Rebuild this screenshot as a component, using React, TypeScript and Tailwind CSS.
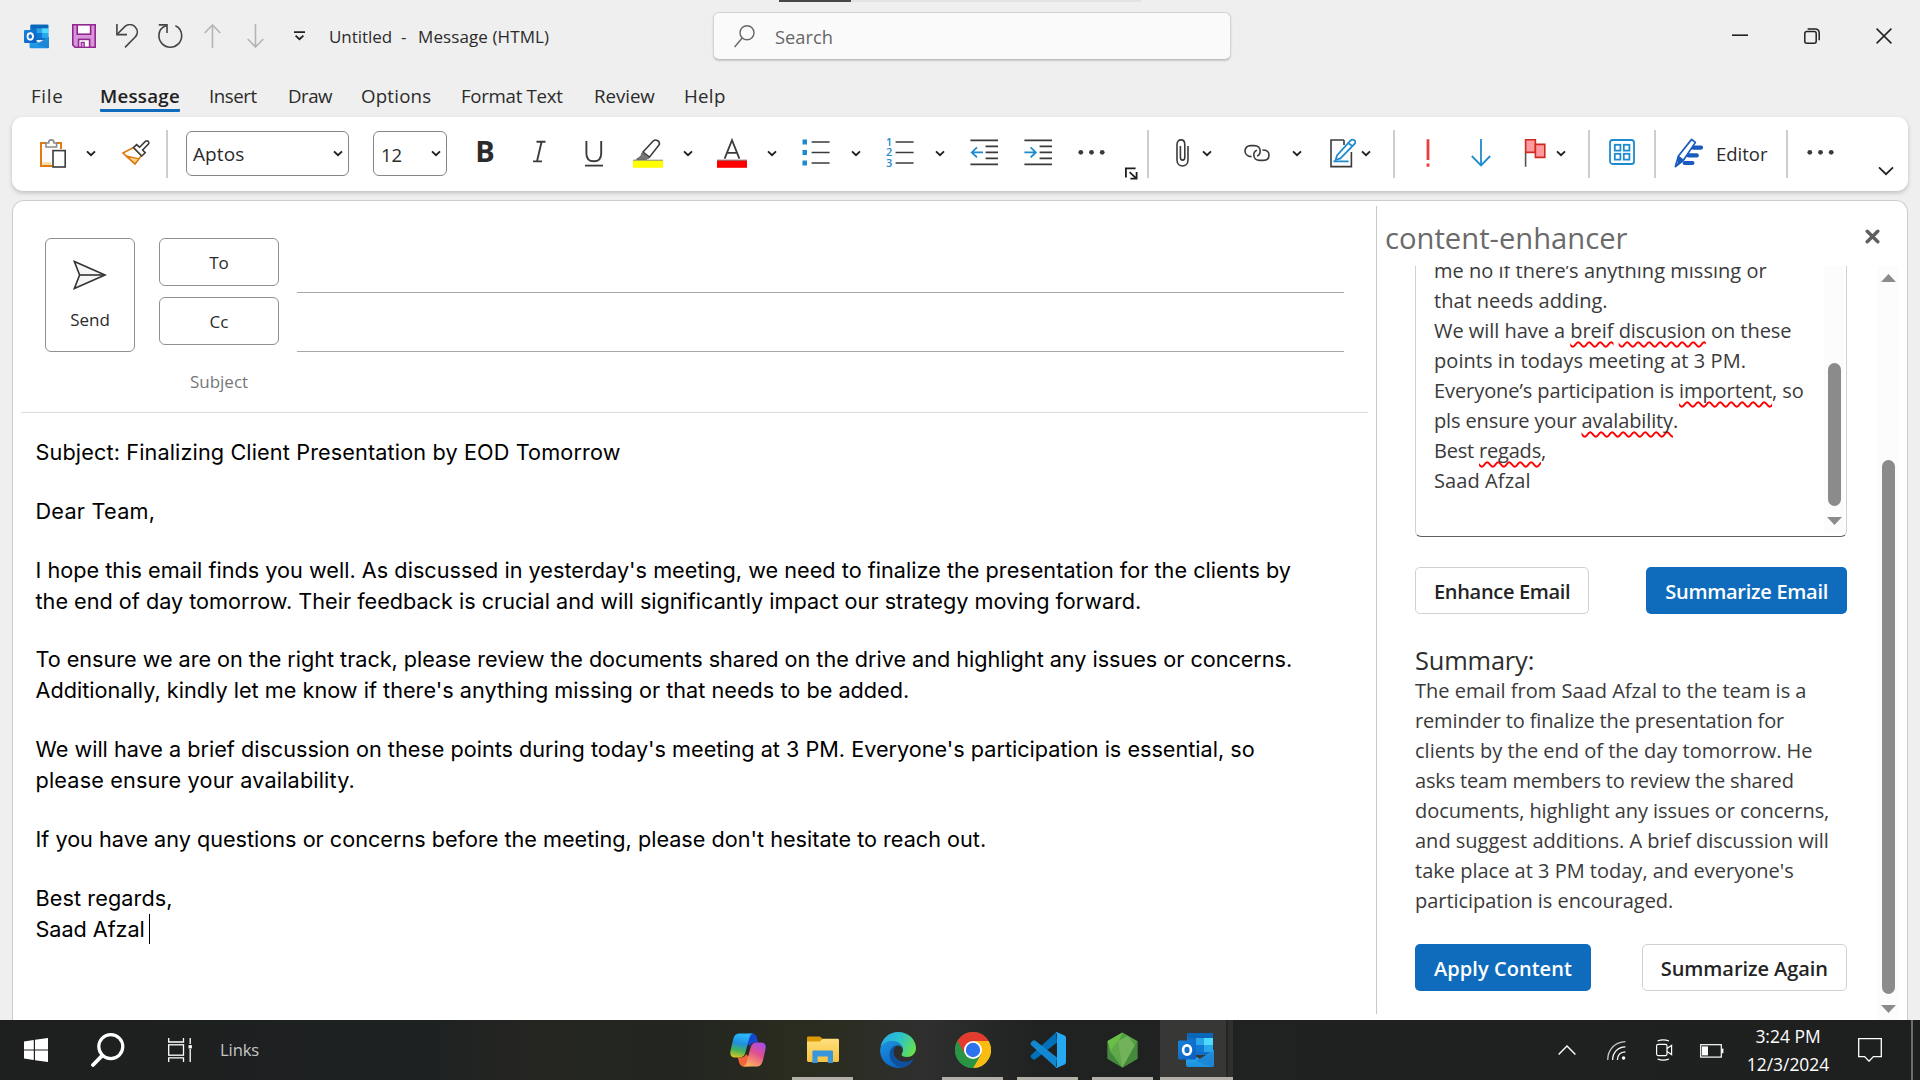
import React from "react";
import type { ReactNode } from "react";

/* ---------- shared glyphs ---------- */

function Caret({ className = "" }: { className?: string }) {
  return (
    <svg className={`h-8 w-[10px] shrink-0 ${className}`} viewBox="0 0 10 32" fill="none" stroke="#1f1f1f" strokeWidth="1.9">
      <path d="M1 13.4 L5 17.2 L9 13.4" />
    </svg>
  );
}

function Icon({ w, className = "", children }: { w: number; className?: string; children: ReactNode }) {
  return (
    <svg className={`h-8 shrink-0 ${className}`} width={w} viewBox={`0 0 ${w} 32`} fill="none" stroke="#3b3b3b" strokeWidth="1.6">
      {children}
    </svg>
  );
}

function Separator({ className = "" }: { className?: string }) {
  return <div className={`h-12 w-0.5 shrink-0 bg-[#cdcdcd] ${className}`} />;
}

function Dots({ className = "" }: { className?: string }) {
  return (
    <Icon w={28} className={className}>
      <g fill="#3b3b3b" stroke="none">
        <circle cx="2.8" cy="14.3" r="2.4" />
        <circle cx="13.5" cy="14.3" r="2.4" />
        <circle cx="24.2" cy="14.3" r="2.4" />
      </g>
    </Icon>
  );
}

function OutlookLogo({ size, id }: { size: number; id: string }) {
  return (
    <svg width={size} height={size} viewBox="0 0 36 36" className="shrink-0">
      <defs>
        <linearGradient id={`${id}-env`} x1="0" y1="0" x2="0" y2="1">
          <stop offset="0" stopColor="#35b8f1" />
          <stop offset="1" stopColor="#1a8fe0" />
        </linearGradient>
        <linearGradient id={`${id}-sq`} x1="0" y1="0" x2="1" y2="1">
          <stop offset="0" stopColor="#1784d9" />
          <stop offset="1" stopColor="#0a5cc0" />
        </linearGradient>
      </defs>
      <rect x="9" y="1" width="26" height="22" rx="1.5" fill="#0f6fc6" />
      <rect x="18" y="6" width="8" height="7" fill="#2aa5ea" />
      <rect x="26" y="6" width="9" height="7" fill="#50d9ff" />
      <rect x="18" y="13" width="8" height="7" fill="#0f78d4" />
      <rect x="26" y="13" width="9" height="7" fill="#28a8ea" />
      <rect x="10" y="1" width="25" height="5" fill="#0a66b8" />
      <path d="M36 18 V33 Q36 35 34 35 H10 Q8 35 8 33 V19 L22 27 Z" fill={`url(#${id}-env)`} />
      <path d="M36 18.5 L18 29 L34.5 35 Q36 35 36 33 Z" fill="#1b7fd0" opacity="0.75" />
      <rect x="0" y="8.5" width="18" height="19" rx="1.6" fill={`url(#${id}-sq)`} />
      <ellipse cx="9" cy="18" rx="3.9" ry="4.6" fill="none" stroke="#fff" strokeWidth="2.7" />
    </svg>
  );
}

/* ---------- title bar ---------- */

function TitleBar() {
  return (
    <header className="relative flex h-[72px] shrink-0 items-center pl-6 text-[#2b2b2b]">
      <div className="absolute top-0 left-[779px] flex h-0.5">
        <div className="w-[72px] bg-[#474747]" />
        <div className="w-[290px] bg-[#e3e3e3]" />
      </div>
      <OutlookLogo size={25} id="tb" />
      <svg className="ml-[23px] shrink-0" width="24" height="24" viewBox="0 0 24 24" fill="none">
        <path d="M0.8 0.8 H23.2 V23.2 H3 L0.8 21 Z" fill="#d795dc" stroke="#92278f" strokeWidth="1.6" />
        <rect x="5.2" y="0.8" width="13.4" height="9.4" fill="#fff" stroke="#92278f" strokeWidth="1.6" />
        <rect x="6.6" y="15.4" width="11" height="8" fill="#fff" stroke="#92278f" strokeWidth="1.6" />
        <rect x="9.2" y="18.4" width="3" height="5" fill="#d795dc" stroke="#92278f" strokeWidth="1.2" />
      </svg>
      <svg className="ml-5 shrink-0" width="22" height="24" viewBox="0 0 22 24" fill="none" stroke="#444" strokeWidth="1.6">
        <path d="M0.9 0 V10.6 H11" />
        <path d="M1.2 10.2 L9 2.4 C12 -0.2 16.2 0 19 2.8 C22 6 22 10 19.2 13 L9 23.4" />
      </svg>
      <svg className="ml-5 shrink-0" width="25" height="24" viewBox="0 0 25 24" fill="none" stroke="#444" strokeWidth="1.6">
        <path d="M0.8 0.9 H9 V9" />
        <path d="M8.6 1.4 C3.6 3 0.9 7.2 0.9 11.6 C0.9 18.2 6 23.2 12.3 23.2 C18.6 23.2 23.7 18.2 23.7 11.8 C23.7 7.4 21.2 3.6 17.4 1.8" />
      </svg>
      <svg className="ml-[21px] shrink-0" width="17" height="24" viewBox="0 0 17 24" fill="none" stroke="#b4b4b4" strokeWidth="1.6">
        <path d="M8.5 24 V1 M0.7 9 L8.5 1 L16.3 9" />
      </svg>
      <svg className="ml-[26px] shrink-0" width="17" height="24" viewBox="0 0 17 24" fill="none" stroke="#b4b4b4" strokeWidth="1.6">
        <path d="M8.5 0 V23 M0.7 15 L8.5 23 L16.3 15" />
      </svg>
      <svg className="ml-[29px] shrink-0" width="13" height="10" viewBox="0 0 13 10" fill="none" stroke="#222" strokeWidth="1.8">
        <path d="M1 1.2 H12 M2.6 4.6 L6.5 8.2 L10.4 4.6" />
      </svg>
      <div className="ml-[23px] flex w-[384px] shrink-0 pt-0.5 text-[17px] leading-6 whitespace-pre">
        <span className="w-[72px] tracking-[-0.06px]">Untitled</span>
        <span className="w-[17px]">-</span>
        <span className="tracking-[0.1px]">Message (HTML)</span>
      </div>
      <div className="flex h-12 w-[518px] shrink-0 items-center rounded-md border border-[#d4d4d4] border-b-[#bdbdbd] bg-[#fafafa] pl-5 shadow-[0_1px_2px_rgba(0,0,0,0.16)]">
        <svg width="21" height="23" viewBox="0 0 21 23" fill="none" stroke="#666" strokeWidth="1.4">
          <circle cx="13" cy="7.8" r="7" />
          <path d="M8.2 13 L0.6 22" />
        </svg>
        <span className="ml-5 pt-0.5 text-[18.3px] leading-6 text-[#666]">Search</span>
      </div>
      <svg className="ml-[501px] shrink-0" width="16" height="16" viewBox="0 0 16 16" stroke="#222" strokeWidth="1.6">
        <path d="M0 7.2 H16" />
      </svg>
      <svg className="ml-14 shrink-0" width="16" height="16" viewBox="0 0 16 16" fill="none" stroke="#222" strokeWidth="1.5">
        <rect x="0.8" y="3.4" width="11.4" height="11.8" rx="2" />
        <path d="M3.6 0.9 H11 Q15.2 0.9 15.2 5 V12.2" />
      </svg>
      <svg className="ml-14 shrink-0" width="16" height="16" viewBox="0 0 16 16" stroke="#222" strokeWidth="1.5">
        <path d="M0.6 0.6 L15.4 15.4 M15.4 0.6 L0.6 15.4" />
      </svg>
    </header>
  );
}

/* ---------- menu tabs ---------- */

function MenuTabs() {
  return (
    <nav className="flex h-[45px] shrink-0 pt-[11px] pl-[31px] text-[18.7px] leading-[26px] text-[#2b2b2b]">
      <span className="w-[69px] tracking-[0.7px]">File</span>
      <span className="mr-[29px] h-[29px] w-[80px] rounded-b-[1px] border-b-[3px] border-[#0f6cbd] font-semibold tracking-[0.25px] whitespace-nowrap text-[#222]">
        Message
      </span>
      <span className="w-[79px] tracking-[-0.45px]">Insert</span>
      <span className="w-[73px] tracking-[-0.5px]">Draw</span>
      <span className="w-[100px] tracking-[0.2px]">Options</span>
      <span className="w-[133px] tracking-[-0.3px]">Format Text</span>
      <span className="w-[90px] tracking-[-0.05px]">Review</span>
      <span className="tracking-[0.3px]">Help</span>
    </nav>
  );
}

/* ---------- ribbon ---------- */

function Ribbon() {
  return (
    <div className="mx-3 flex h-[74px] shrink-0 items-center rounded-[11px] bg-white text-[#2b2b2b] shadow-[0_2px_4px_rgba(0,0,0,0.2)]">
      {/* paste */}
      <Icon w={26} className="ml-7">
        <path d="M7 5 H1 V28 H12" stroke="#e07b10" strokeWidth="2" fill="#fbfbfb" />
        <path d="M2.6 25.6 H11" stroke="#fbd99a" strokeWidth="2.6" />
        <path d="M16 5 H21 V11" stroke="#e07b10" strokeWidth="2" />
        <path d="M6 9 V5 H8.6 C8.6 0.8 14 0.8 14 5 H16.6 V9 Z" fill="#fff" stroke="#8a8a8a" />
        <rect x="13" y="12.6" width="12.2" height="16.4" fill="#fff" />
      </Icon>
      <Caret className="ml-5" />
      {/* format painter */}
      <Icon w={28} className="ml-[26px]">
        <path d="M1 15 L11.5 9.6 L19.4 17.6 L13 26 Z" fill="#fff" stroke="#e07b10" />
        <path d="M4 18 L17 20.8 L13 25.6 Z" fill="#fbd58e" stroke="#e07b10" strokeWidth="1.3" strokeLinejoin="round" />
        <path d="M11.5 9.6 L14.6 6.6 L17.6 9.2 L23.6 3.2 C25.6 2 27.6 4 26.4 6 L20.6 12 L23.2 14.8 L19.8 18 Z" fill="#fff" />
      </Icon>
      <Separator className="ml-4" />
      <div className="mb-px ml-[18px] flex h-[45px] w-[163px] shrink-0 items-center justify-between rounded-md border border-[#868686] pr-[5px] pl-1.5 text-[19px]">
        <span className="pt-[2px] tracking-[0.1px]">Aptos</span>
        <Caret />
      </div>
      <div className="mb-px ml-6 flex h-[45px] w-[74px] shrink-0 items-center justify-between rounded-md border border-[#868686] pr-[5px] pl-[7px] text-[18.5px]">
        <span className="pt-[2px]">12</span>
        <Caret />
      </div>
      <span className="ml-[26px] w-6 shrink-0 pb-[6px] text-center text-[29px] leading-8 font-bold">B</span>
      <Icon w={24} className="ml-[30px]">
        <path d="M9.5 3.8 H18.5 M6 23.4 H15 M14.6 3.8 L10 23.4" strokeWidth="1.9" />
      </Icon>
      <Icon w={24} className="ml-[31px]">
        <path d="M4.4 3 V15.4 C4.4 21 7.4 23.2 11.8 23.2 C16.4 23.2 19.2 20.8 19.2 15.4 V3" strokeWidth="1.9" />
        <path d="M3 27.6 H21" strokeWidth="1.8" />
      </Icon>
      {/* highlighter */}
      <Icon w={32} className="ml-[26px]">
        <rect x="1" y="22.4" width="30" height="7.4" fill="#ffff00" stroke="none" />
        <path d="M1 22.2 H31" stroke="#8a8a6a" strokeWidth="1" />
        <path d="M11 14 L21.4 2.8 C23.4 1 28 2.4 27.4 6.4 L17.4 19.2 Z" fill="#fff" />
        <path d="M10 14.6 L17 20 L14 21.4 H4.4 L9 18 Z" fill="#777" stroke="#666" strokeWidth="1" />
      </Icon>
      <Caret className="ml-[19px]" />
      {/* font colour */}
      <Icon w={32} className="ml-[23px]">
        <rect x="1" y="22.4" width="30" height="7.4" fill="#ff0000" stroke="none" />
        <path d="M1 22.2 H31" stroke="#8a5a5a" strokeWidth="1" />
        <path d="M8.6 20.6 L16 2.2 L23.4 20.6 M11 14.8 H21" strokeWidth="1.8" />
      </Icon>
      <Caret className="ml-[19px]" />
      {/* bullets */}
      <Icon w={28} className="ml-[25px]">
        <path d="M9.6 4 H27.6 M9.6 14.5 H27.6 M9.6 25 H27.6" />
        <path d="M0.5 4 H5 M0.5 14.5 H5 M0.5 25 H5" stroke="#1e8bcd" strokeWidth="4.8" />
      </Icon>
      <Caret className="ml-[21px]" />
      {/* numbering */}
      <Icon w={28} className="ml-[25px] overflow-visible">
        <path d="M9.6 4 H27.6 M9.6 14.5 H27.6 M9.6 25 H27.6" />
        <g fill="#1e8bcd" stroke="none" fontSize="11" fontWeight="600">
          <text x="0" y="8">1</text>
          <text x="0" y="18.4">2</text>
          <text x="0" y="28.8">3</text>
        </g>
      </Icon>
      <Caret className="ml-[21px]" />
      {/* outdent */}
      <Icon w={28} className="ml-[25px]">
        <path d="M0.4 2.4 H28 M15.6 8.4 H28 M15.6 14.4 H28 M15.6 20.4 H28 M0.4 26.4 H28" />
        <path d="M13 14.4 H1.6 M7 9.4 L1.8 14.4 L7 19.4" stroke="#1e8bcd" strokeWidth="1.8" />
      </Icon>
      {/* indent */}
      <Icon w={28} className="ml-[26px]">
        <path d="M0.4 2.4 H28 M15.6 8.4 H28 M15.6 14.4 H28 M15.6 20.4 H28 M0.4 26.4 H28" />
        <path d="M0.4 14.4 H12 M6.6 9.4 L11.8 14.4 L6.6 19.4" stroke="#1e8bcd" strokeWidth="1.8" />
      </Icon>
      <Dots className="ml-[26px]" />
      <svg className="mt-[38px] ml-[19px] shrink-0" width="13" height="13" viewBox="0 0 13 13" fill="none" stroke="#1f1f1f" strokeWidth="1.8">
        <path d="M0.9 10.6 V1.4 H10.6 M4.6 5.2 L11 11.2 M5.4 11.6 H11.6 V5" />
      </svg>
      <Separator className="ml-[9px]" />
      {/* attach */}
      <Icon w={13} className="ml-[27px]">
        <path d="M12 8 V22 C12 30 1 30 1 22 V6.4 C1 0.4 8.8 0.4 8.8 6.4 V19.6 C8.8 23 4.4 23 4.4 19.6 V8" />
      </Icon>
      <Caret className="ml-[13px]" />
      {/* link */}
      <Icon w={26} className="ml-8">
        <path d="M7.6 18.6 C3.4 18.6 1 16 1 13 C1 10 3.2 7.6 6.6 7.6 H10.2 C14 7.6 16.2 10 16.2 13 C16.2 15.4 15 17.4 13 18" />
        <path d="M18.4 12 C22.6 12 25 14 25 17 C25 20.2 22.8 22.4 19.4 22.4 H15.8 C12 22.4 9.8 20 9.8 17 C9.8 14.6 11 12.8 13 12.2" />
      </Icon>
      <Caret className="ml-[22px]" />
      {/* signature */}
      <Icon w={26} className="ml-7">
        <path d="M14 2 H1 V28.6 H21.4 V14" fill="#fbfbfb" />
        <path d="M14 2 V7" />
        <path d="M20.4 2.6 C22.4 0.4 26.4 2.4 25 5.4 L10.4 20.4 L5.6 22 L7 17.4 Z" fill="#fff" stroke="#1e8bcd" strokeWidth="1.7" />
        <path d="M3.4 23.4 H18.6 M18 5 L22.4 8" stroke="#1e8bcd" strokeWidth="1.6" />
      </Icon>
      <Caret className="ml-[5px]" />
      <Separator className="ml-[22px]" />
      <Icon w={6} className="ml-[30px]">
        <path d="M3 1.2 V22 M3 25.4 V28.8" stroke="#ef3b3b" strokeWidth="2.8" />
      </Icon>
      <Icon w={20} className="ml-10">
        <path d="M10 1 V27 M0.8 18 L10 27.4 L19.2 18" stroke="#1e8bcd" strokeWidth="1.8" />
      </Icon>
      {/* flag */}
      <Icon w={22} className="ml-[33px]">
        <path d="M1.6 15 V28.8" stroke="#555" />
        <path d="M1.6 1.8 H11.4 V14.4 H1.6 Z" fill="#ff9a9e" stroke="#cf2a20" strokeWidth="1.6" />
        <path d="M11.4 6.4 H20.8 V19.4 H11.4 Z" fill="#ff9a9e" stroke="#cf2a20" strokeWidth="1.6" />
      </Icon>
      <Caret className="ml-[10px]" />
      <Separator className="ml-[22px]" />
      {/* apps */}
      <Icon w={26} className="ml-[19px]">
        <g stroke="#1e8bcd" strokeWidth="1.8">
          <rect x="1" y="2" width="24" height="24" rx="2.6" />
          <rect x="5.8" y="6.8" width="5.6" height="5.8" />
          <rect x="14.8" y="6.8" width="5.6" height="5.8" />
          <rect x="5.8" y="15.8" width="5.6" height="5.8" />
          <rect x="14.8" y="15.8" width="5.6" height="5.8" />
        </g>
      </Icon>
      <Separator className="ml-[19px]" />
      {/* editor */}
      <Icon w={30} className="ml-[18px]">
        <path d="M19 9.6 H27 M14.6 17.4 H22.8 M10.6 25 H18.4" stroke="#185abd" strokeWidth="4.2" strokeLinecap="round" />
        <path d="M1.4 28.6 L4.4 18 L17.6 1.4 L21.4 4.4 L9.6 22 Z" fill="#fff" stroke="#185abd" strokeWidth="1.7" strokeLinejoin="round" />
        <path d="M4.4 18 L9.6 22 L3 28" fill="#185abd" stroke="#185abd" strokeWidth="1" />
      </Icon>
      <span className="ml-[12px] w-[70px] shrink-0 pb-px text-[18.5px]">Editor</span>
      <Separator />
      <Dots className="ml-[19px]" />
      <svg className="mt-[33px] ml-[43px] shrink-0" width="16" height="10" viewBox="0 0 16 10" fill="none" stroke="#222" strokeWidth="1.8">
        <path d="M1 1.4 L8 8.2 L15 1.4" />
      </svg>
    </div>
  );
}

/* ---------- compose area ---------- */

function Recipients() {
  return (
    <div className="flex h-[212px] shrink-0 border-b border-[#dcdcdc] pt-[37px] pl-6 text-[17px] text-[#2b2b2b]">
      <div className="flex h-[114px] w-[90px] flex-col items-center rounded-md border border-[#909090] pt-[21px]">
        <svg width="34" height="30" viewBox="0 0 34 30" fill="none" stroke="#333" strokeWidth="1.6">
          <path d="M1.4 1.6 L32 15 L1.4 28.4 L6.6 15 Z" fill="#f6f6f6" />
          <path d="M6.6 15 H32" />
        </svg>
        <span className="mt-[18px] leading-6 tracking-[-0.02px]">Send</span>
      </div>
      <div className="ml-6 flex w-[120px] flex-col">
        <div className="flex h-[48px] items-center justify-center rounded-md border border-[#909090] pt-px">To</div>
        <div className="mt-[11px] flex h-[48px] items-center justify-center rounded-md border border-[#909090] pt-px">Cc</div>
        <span className="mt-[25px] text-center leading-6 text-[#777]">Subject</span>
      </div>
      <div className="ml-[18px] w-[1047px]">
        <div className="h-[55px] border-b border-[#a8a8a8]" />
        <div className="h-[59px] border-b border-[#a8a8a8]" />
      </div>
    </div>
  );
}

function MessageBody() {
  return (
    <div className="flex flex-col gap-[27.8px] pt-[24px] pl-[14.5px] font-['Inter',sans-serif] text-[21.65px] leading-[31px] whitespace-nowrap text-black">
      <p className="tracking-[0.13px]">Subject: Finalizing Client Presentation by EOD Tomorrow</p>
      <p className="tracking-[0.25px]">Dear Team,</p>
      <p>
        <span className="tracking-[0.02px]">
          I hope this email finds you well. As discussed in yesterday's meeting, we need to finalize the presentation for the clients by
        </span>
        <br />
        the end of day tomorrow. Their feedback is crucial and will significantly impact our strategy moving forward.
      </p>
      <p>
        <span className="tracking-[-0.03px]">
          To ensure we are on the right track, please review the documents shared on the drive and highlight any issues or concerns.
        </span>
        <br />
        <span className="tracking-[0.02px]">Additionally, kindly let me know if there's anything missing or that needs to be added.</span>
      </p>
      <p>
        We will have a brief discussion on these points during today's meeting at 3 PM. Everyone's participation is essential, so
        <br />
        <span className="tracking-[0.17px]">please ensure your availability.</span>
      </p>
      <p>If you have any questions or concerns before the meeting, please don't hesitate to reach out.</p>
      <p>
        <span className="tracking-[0.09px]">Best regards,</span>
        <br />
        <span className="flex tracking-[-0.05px]">
          Saad Afzal
          <span className="ml-[4px] h-[30px] w-px bg-black" />
        </span>
      </p>
    </div>
  );
}

/* ---------- add-in pane ---------- */

function Misspelt({ children }: { children: ReactNode }) {
  return (
    <span className="underline decoration-[#f00] decoration-wavy decoration-[1.6px] underline-offset-[3px] [text-decoration-skip-ink:none]">
      {children}
    </span>
  );
}

function Arrow({ up = false, className = "" }: { up?: boolean; className?: string }) {
  return (
    <svg width="15" height="8" viewBox="0 0 15 8" fill="#8b8b8b" className={`shrink-0 ${className}`}>
      <path d={up ? "M0 8 L7.5 0 L15 8 Z" : "M0 0 L7.5 8 L15 0 Z"} />
    </svg>
  );
}

const plainButton = "flex h-[47px] items-center rounded-[5px] border border-[#d1d1d1] bg-white px-[18px] pt-[3px] text-[#242424]";
const primaryButton = "flex h-[47px] items-center rounded-[5px] bg-[#0f6cbd] px-[19px] pt-[3px] text-white";

function AddInPane() {
  return (
    <aside className="flex min-h-0 flex-1 flex-col">
      <div className="flex h-[65px] shrink-0 justify-between pr-[27px] pl-[8px] text-[#6a6a6a]">
        <h1 className="pt-[17px] text-[29.2px] leading-10">content-enhancer</h1>
        <svg className="mt-[28px]" width="15" height="15" viewBox="0 0 15 15" stroke="#5f5f5f" strokeWidth="3.4" strokeLinecap="round">
          <path d="M2.2 2.2 L12.8 12.8 M12.8 2.2 L2.2 12.8" />
        </svg>
      </div>
      <div className="flex min-h-0 flex-1 overflow-hidden">
        <div className="ml-[38px] w-[432px] text-[20px] leading-[30px] whitespace-nowrap text-[#3a3a3a]">
          <div className="flex h-[271px] justify-between overflow-hidden rounded-b-md border border-t-0 border-[#d1d1d1] border-b-[#616161] pr-0.5 pl-[18px]">
            <div className="-mt-[10px]">
              <div className="tracking-[0.02px]">me no if there’s anything missing or</div>
              <div>that needs adding.</div>
              <div className="tracking-[-0.04px]">
                We will have a <Misspelt>breif</Misspelt> <Misspelt>discusion</Misspelt> on these
              </div>
              <div className="tracking-[0.06px]">points in todays meeting at 3 PM.</div>
              <div className="tracking-[-0.08px]">
                Everyone’s participation is <Misspelt>importent</Misspelt>, so
              </div>
              <div className="tracking-[-0.13px]">
                pls ensure your <Misspelt>avalability</Misspelt>.
              </div>
              <div className="tracking-[-0.2px]">
                Best <Misspelt>regads</Misspelt>,
              </div>
              <div className="tracking-[0.1px]">Saad Afzal</div>
            </div>
            <div className="flex h-[267px] w-5 flex-col items-center bg-[#fcfcfc]">
              <div className="mt-[97px] h-[143px] w-[13px] shrink-0 rounded-full bg-[#8b8b8b]" />
              <Arrow className="mt-[11px]" />
            </div>
          </div>
          <div className="mt-[30px] flex justify-between font-semibold">
            <div className={plainButton}>
              <span className="tracking-[-0.32px]">Enhance Email</span>
            </div>
            <div className={primaryButton}>
              <span className="tracking-[-0.28px]">Summarize Email</span>
            </div>
          </div>
          <h2 className="mt-[30px] text-[25.4px] leading-[32px] tracking-[-0.15px] text-[#2e2e2e]">Summary:</h2>
          <div>
            <div>The email from Saad Afzal to the team is a</div>
            <div className="tracking-[-0.14px]">reminder to finalize the presentation for</div>
            <div>clients by the end of the day tomorrow. He</div>
            <div className="tracking-[-0.16px]">asks team members to review the shared</div>
            <div className="tracking-[-0.07px]">documents, highlight any issues or concerns,</div>
            <div>and suggest additions. A brief discussion will</div>
            <div>take place at 3 PM today, and everyone's</div>
            <div className="tracking-[-0.04px]">participation is encouraged.</div>
          </div>
          <div className="mt-[28px] flex justify-between font-semibold">
            <div className={primaryButton}>
              <span className="tracking-[0.05px]">Apply Content</span>
            </div>
            <div className={plainButton}>
              <span className="tracking-[-0.06px]">Summarize Again</span>
            </div>
          </div>
        </div>
        <div className="ml-[30px] flex w-[22px] flex-col items-center bg-[#fcfcfc]">
          <Arrow up className="mt-2" />
          <div className="mt-[178px] h-[534px] w-[13px] shrink-0 rounded-full bg-[#8b8b8b]" />
          <Arrow className="mt-[11px]" />
        </div>
      </div>
    </aside>
  );
}

/* ---------- taskbar ---------- */

function TaskCell({ running = false, children }: { running?: boolean; children: ReactNode }) {
  return (
    <div className="relative flex h-full w-[75px] shrink-0 items-center justify-center">
      {children}
      {running && <div className="absolute bottom-0 h-[3px] w-[61px] bg-[#b3b0a9]" />}
    </div>
  );
}

function Taskbar() {
  return (
    <footer className="flex h-[60px] shrink-0 items-center bg-[linear-gradient(90deg,#1e201f_0%,#1e2122_22%,#252622_28%,#222520_35%,#2a2c20_41%,#2b2d22_44%,#2f2f2f_48%,#202222_54%,#202121_66%,#1e201f_100%)]">
      <svg className="ml-6 shrink-0" width="24" height="24" viewBox="0 0 24 24" fill="#fff">
        <path d="M0 3.4 L9.8 2 V11.4 H0 Z M11 1.8 L24 0 V11.4 H11 Z M0 12.6 H9.8 V22 L0 20.6 Z M11 12.6 H24 V24 L11 22.2 Z" />
      </svg>
      <svg className="ml-[43px] shrink-0" width="34" height="34" viewBox="0 0 34 34" fill="none" stroke="#fff" strokeWidth="3.2">
        <circle cx="19.8" cy="13.6" r="12" />
        <path d="M11.4 22.4 L2 32" strokeWidth="3.8" strokeLinecap="round" />
      </svg>
      <svg className="ml-[43px] shrink-0" width="24" height="24" viewBox="0 0 24 24" fill="none" stroke="#fff" strokeWidth="1.3">
        <path d="M0.7 0 V4 H15.5 V0 M0.7 24 V19.8 H15.5 V24 M22.2 0 V6 M22.2 11 V24" />
        <rect x="0.7" y="6.8" width="14.8" height="10.4" />
        <rect x="21.2" y="7.8" width="2" height="2" fill="#fff" />
      </svg>
      <span className="ml-[28px] w-[490px] shrink-0 pt-px text-[16.6px] tracking-[-0.1px] text-[#c6c6c6]">Links</span>

      {/* Copilot */}
      <TaskCell>
        <svg width="36" height="34" viewBox="0 0 36 34">
          <defs>
            <linearGradient id="cpA" x1="0.2" y1="0" x2="0" y2="1">
              <stop offset="0" stopColor="#29b6f6" />
              <stop offset="0.35" stopColor="#1f8fe0" />
              <stop offset="0.65" stopColor="#47b25a" />
              <stop offset="1" stopColor="#f6c817" />
            </linearGradient>
            <linearGradient id="cpB" x1="0.8" y1="0" x2="0.3" y2="1">
              <stop offset="0" stopColor="#a54bf0" />
              <stop offset="0.45" stopColor="#e0508c" />
              <stop offset="1" stopColor="#ffb35c" />
            </linearGradient>
          </defs>
          <path d="M17 0.6 H23 Q26 1 27 5 L28.2 9.4 H25 Q21 9.6 20 13 L17 10 Z" fill="#1646d0" />
          <path d="M19 33.4 H13 Q10 33 9 29 L7.8 24.6 H11 Q15 24.4 16 21 L19 24 Z" fill="#f2653a" />
          <path d="M8.6 0.6 H23 Q20.4 1.2 19.6 4 L15.4 19.6 Q14 24.6 9.6 24.6 H5 Q-1 24.2 0.6 17.4 L3.2 6 Q4.6 0.9 8.6 0.6 Z" fill="url(#cpA)" />
          <path d="M27.4 33.4 H13 Q15.6 32.8 16.4 30 L20.6 14.4 Q22 9.4 26.4 9.4 H31 Q37 9.8 35.4 16.6 L32.8 28 Q31.4 33.1 27.4 33.4 Z" fill="url(#cpB)" />
        </svg>
      </TaskCell>

      {/* File Explorer */}
      <TaskCell running>
        <svg width="32" height="28" viewBox="0 0 32 28">
          <defs>
            <linearGradient id="feA" x1="0" y1="0" x2="0" y2="1">
              <stop offset="0" stopColor="#ffdf7c" />
              <stop offset="1" stopColor="#f7c23f" />
            </linearGradient>
          </defs>
          <path d="M0 2 Q0 0.6 1.4 0.6 H12.6 L15.4 2.6 V8 H0 Z" fill="#dd9a06" />
          <path d="M0 5.4 H13 L15.6 2.8 H30.6 Q32 2.8 32 4.2 V24.6 Q32 26 30.6 26 H1.4 Q0 26 0 24.6 Z" fill="url(#feA)" />
          <path d="M5.4 27 V15.6 Q5.4 14.4 6.6 14.4 H24.8 Q26 14.4 26 15.6 V27 H20.8 V20.4 H10.6 V27 Z" fill="#3a96dd" />
        </svg>
      </TaskCell>

      {/* Edge */}
      <TaskCell>
        <svg width="36" height="36" viewBox="0 0 36 36">
          <defs>
            <linearGradient id="edA" x1="0" y1="0.2" x2="1" y2="0.6">
              <stop offset="0" stopColor="#2aa7ea" />
              <stop offset="0.5" stopColor="#2cc3c9" />
              <stop offset="1" stopColor="#66e04e" />
            </linearGradient>
            <linearGradient id="edB" x1="0" y1="0" x2="0.4" y2="1">
              <stop offset="0" stopColor="#1d93de" />
              <stop offset="1" stopColor="#0a6bc8" />
            </linearGradient>
          </defs>
          <path d="M0.4 16 C1.6 6.6 9 0 18 0 C29 0 36 8 36 16 C36 21.6 32 25 27 25 C23.4 25 21.4 23.6 21.6 22.4 C21.8 21 23 20.4 23 18 C23 13 18 9.4 12 9.4 C6 9.4 1.6 13 0.4 16 Z" fill="url(#edA)" />
          <path d="M0.2 17 C1.6 12 6 9 12 9 C18 9 22.4 12.4 23 17 C21.6 14.4 19.4 13.4 17 13.6 C12.8 14 10.4 18 10.6 22.4 C10.8 29 15.6 34 22 35.6 C10 37.6 -1 28.6 0.2 17 Z" fill="url(#edB)" />
          <path d="M17 13.6 C14.2 15.4 13 19 14 22.4 C15.6 27.8 21.6 30.4 27.6 29.4 C30 29 31.6 28 32.6 27.4 C33.4 27 33.6 27.6 33.2 28.2 C30.6 32.4 26.6 35.2 22 35.7 C15 35 9.6 29 9.6 22.4 C9.6 18 12.4 14 17 13.6 Z" fill="#11509d" />
        </svg>
      </TaskCell>

      {/* Chrome */}
      <TaskCell running>
        <svg width="36" height="36" viewBox="0 0 36 36">
          <circle cx="18" cy="18" r="18" fill="#2a9444" />
          <path d="M2.4 9 A18 18 0 0 1 33.6 9 H18 L10.2 22.5 Z" fill="#e33b2e" />
          <path d="M18 9 H33.6 A18 18 0 0 1 18 36 L25.8 22.5 Z" fill="#fbbc12" />
          <path d="M2.4 9 L10.2 22.5 L18 27 L25.8 22.5 L18 36 A18 18 0 0 1 2.4 9 Z" fill="#2a9444" />
          <circle cx="18" cy="18" r="9" fill="#fff" />
          <circle cx="18" cy="18" r="7.2" fill="#2b72ec" />
        </svg>
      </TaskCell>

      {/* VS Code */}
      <TaskCell running>
        <svg width="36" height="36" viewBox="0 0 36 36">
          <path d="M26 0.4 L1 23 Q0 24.4 1 25.6 L3 27.4 Q4.2 28 5.4 27.2 L27 10.4 Z" fill="#0070b8" />
          <path d="M26 35.6 L1 13 Q0 11.6 1 10.4 L3 8.6 Q4.2 8 5.4 8.8 L27 25.6 Z" fill="#1288d0" />
          <path d="M25.6 35.6 Q27 34.8 27 33 V3 Q27 1.2 25.6 0.4 Q26.6 -0.2 27.8 0.4 L34.6 3.6 Q36 4.4 36 6 V30 Q36 31.6 34.6 32.4 L27.8 35.6 Q26.6 36.2 25.6 35.6 Z" fill="#27a9f2" />
        </svg>
      </TaskCell>

      {/* green hexagon */}
      <TaskCell running>
        <svg width="31" height="36" viewBox="0 0 31 36">
          <path d="M15.5 0.4 L30.4 9 V26.8 L15.5 35.6 L0.6 26.8 V9 Z" fill="#529f44" />
          <path d="M15.5 0.4 L0.6 9 L3 21 L11 10 Z" fill="#6cbf46" />
          <path d="M0.6 9 V26.8 L15.5 35.6 L3 18 Z" fill="#43873c" />
          <path d="M11 9 L21 4 L28 14 L15.5 35.6 L3 19 Z" fill="#72b25a" />
          <path d="M11 9 L15.5 35.6 L3 19 Z" fill="#5fa94a" />
          <path d="M30.4 9 V26.8 L15.5 35.6 Z" fill="#458a3c" />
        </svg>
      </TaskCell>

      {/* Outlook, focused, with a second window behind */}
      <div className="relative flex h-full w-[73px] shrink-0">
        <div className="flex w-[66px] items-center bg-[#373736] pl-[17.5px]">
          <OutlookLogo size={36} id="task" />
        </div>
        <div className="w-0.5 bg-[#242424]" />
        <div className="w-[5px] bg-[#2f2f2f]" />
        <div className="absolute bottom-0 h-[3px] w-[73px] bg-[#b3b0a9]" />
      </div>

      {/* notification area */}
      <svg className="ml-[325px] shrink-0" width="18" height="10" viewBox="0 0 18 10" fill="none" stroke="#fff" strokeWidth="1.4">
        <path d="M0.6 9.4 L9 1 L17.4 9.4" />
      </svg>
      <svg className="ml-[31px] shrink-0" width="19" height="19" viewBox="0 0 19 19" fill="none" stroke="#fff" strokeWidth="1.3">
        <path d="M0.7 19 C0.7 8.6 8 1 18.4 0.7" opacity="0.75" />
        <path d="M5.6 19 C5.6 11.4 11 6 18.4 5.8" />
        <path d="M10.4 19 C10.4 14 13.6 11 18.4 10.8" />
        <circle cx="16.6" cy="17" r="1.7" fill="#fff" stroke="none" />
      </svg>
      <svg className="ml-[30px] shrink-0" width="17" height="22" viewBox="0 0 17 22" fill="none" stroke="#fff" strokeWidth="1.2">
        <rect x="0.6" y="5.4" width="10.4" height="11.2" rx="1.5" />
        <path d="M11 9.6 L15.6 6.4 V15.6 L11 12.4 M1.6 2 Q7 -0.4 13 2 M1.6 20 Q7 22.4 13 20" />
      </svg>
      <svg className="mt-px ml-[27px] shrink-0" width="24" height="14" viewBox="0 0 24 14" fill="none" stroke="#fff" strokeWidth="1.2">
        <rect x="0.7" y="0.7" width="20.6" height="12.4" />
        <rect x="2" y="2.4" width="6" height="9" fill="#fff" stroke="none" />
        <path d="M22.6 4.6 V9.2" strokeWidth="1.6" />
      </svg>
      <div className="ml-[22px] flex w-[84px] shrink-0 flex-col items-center text-[17.45px] leading-7 text-white">
        <span>3:24 PM</span>
        <span>12/3/2024</span>
      </div>
      <svg className="ml-7 shrink-0" width="24" height="24" viewBox="0 0 24 24" fill="none" stroke="#fff" strokeWidth="1.3">
        <path d="M0.7 0.7 H23.3 V18.6 H15.4 L11 23.2 L6.6 18.6 H0.7 Z" />
      </svg>
      <div className="ml-[29px] h-full w-0.5 shrink-0 bg-[#6d6d6d]" />
    </footer>
  );
}

export default function App() {
  return (
    <div className="flex h-[1080px] w-[1920px] flex-col overflow-hidden bg-[#efefef] font-['Open_Sans',sans-serif]">
      <TitleBar />
      <MenuTabs />
      <Ribbon />
      <main className="mx-3 mt-[9px] flex min-h-0 flex-1 overflow-hidden rounded-t-xl border border-b-0 border-[#cdcdcd] bg-white">
        <section className="w-[1355px] shrink-0 pl-2">
          <Recipients />
          <MessageBody />
        </section>
        <div className="mt-[5px] mb-[6px] ml-[8px] w-px shrink-0 bg-[#c8c8c8]" />
        <AddInPane />
      </main>
      <Taskbar />
    </div>
  );
}
